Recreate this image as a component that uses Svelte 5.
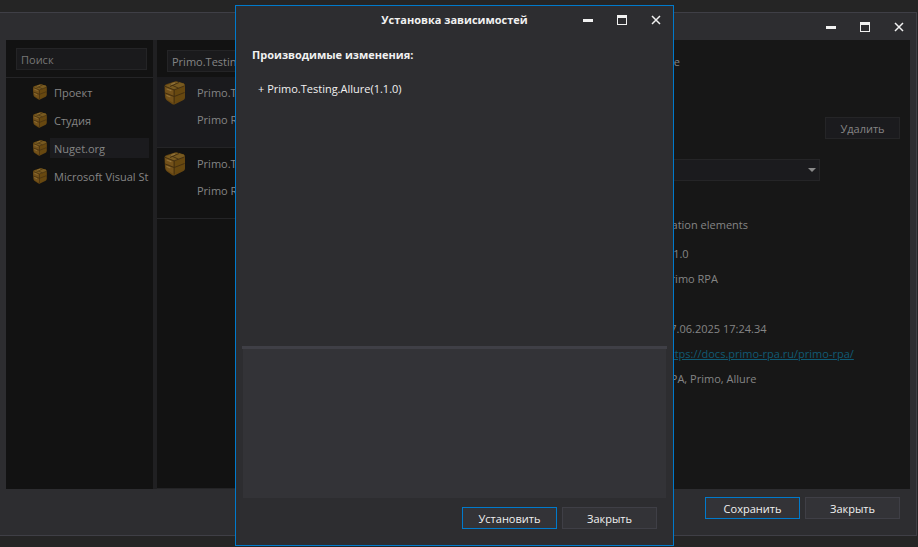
<script>
  const sources = ['Проект', 'Студия', 'Nuget.org', 'Microsoft Visual Studio Offline Packages'];
  let current = $state('Nuget.org');
  const packages = [
    { name: 'Primo.Testing', text: 'Primo RPA' },
    { name: 'Primo.Testing.Allure', text: 'Primo RPA' }
  ];
  let query = $state('Primo.Testing');
</script>

{#snippet box(size)}
  <svg class="box" width={size} height={size} viewBox="0 0 24 24" aria-hidden="true">
    <path d="M1.500 5Q2 3.500 4 3l7-2.300Q13 0 15 .8l5.500 1.400Q22 3 22 5v11.500q0 1.500-1.500 2.500L12 23.300q-1.500.7-3-.3L4 19.500Q2.500 18.500 2 16z" fill="#664712" />
    <path d="M2 5l9-4 3-.2 7 2L21.500 5l-10 4z" fill="#785a20" />
    <path d="M2 5.500l8.500 3.300v6L2.300 11.500zM2.500 12.500l8 3.200V22L3.500 18z" fill="#73511a" />
    <path d="M12 9.500 21.700 6v5.500L12 15zM12 16l9.500-3.500v4L12 22z" fill="#674810" />
    <path d="M2 5.300l9 3.600 10.500-4M11.200 9v13.500M2.200 12l9 3.500 10.300-4M7 3.200l8.500 4M16 1.500l-9 4" fill="none" stroke="#3f2d10" stroke-width=".9" />
    <path d="M4 8l4 1.600M4 14.500l3 1.200M8 3.500l3.500-1.400" stroke="#91723a" stroke-width="1.200" stroke-linecap="round" />
  </svg>
{/snippet}

{#snippet controls()}
  <div class="controls">
    <button aria-label="Свернуть"><svg width="12" height="12" viewBox="0 0 12 12"><path d="M1 5h10v3H1z" fill="#f1f1f1" /></svg></button>
    <button aria-label="Развернуть"><svg width="12" height="12" viewBox="0 0 12 12"><path d="M1 1h10v10H1zM2 4v6h8V4z" fill="#f1f1f1" fill-rule="evenodd" /></svg></button>
    <button aria-label="Закрыть окно"><svg width="12" height="12" viewBox="0 0 12 12"><path d="M2 2l8 8M10 2l-8 8" stroke="#f1f1f1" stroke-width="1.500" /></svg></button>
  </div>
{/snippet}

<div class="desktop">
  <main class="window">
    <header class="bar">{@render controls()}</header>
    <div class="content">
      <nav class="sources">
        <div class="find"><input aria-label="Поиск" placeholder="Поиск" /></div>
        <ul>
          {#each sources as s}
            <li>
              {@render box(16)}
              <button class:selected={current === s} onclick={() => (current = s)}>{s}</button>
            </li>
          {/each}
        </ul>
      </nav>
      <div class="splitter"></div>
      <section class="list">
        <div class="find"><input aria-label="Пакет" bind:value={query} /></div>
        {#each packages as p, i}
          <article class:active={i === 0}>
            {@render box(24)}
            <div><p>{p.name}</p><p>{p.text}</p></div>
          </article>
        {/each}
      </section>
      <section class="details">
        <h2>Primo.Testing.Allure</h2>
        <button class="remove">Удалить</button>
        <div class="version">
          <select aria-label="Версия"><option>1.1.0</option></select>
          <svg width="8" height="4" viewBox="0 0 8 4"><path d="M0 0h8L4 4z" fill="#8a8a8a" /></svg>
        </div>
        <p class="about">Automation elements</p>
        <div class="facts">
          <p>1.1.0</p>
          <p>Primo RPA</p>
          <p class="date">27.06.2025 17:24.34</p>
          <p><a href="https://docs.primo-rpa.ru/primo-rpa/">https://docs.primo-rpa.ru/primo-rpa/</a></p>
          <p>RPA, Primo, Allure</p>
        </div>
      </section>
    </div>
    <footer>
      <button class="btn primary">Сохранить</button>
      <button class="btn">Закрыть</button>
    </footer>
  </main>

  <div class="dialog" role="dialog" aria-labelledby="dialog-title">
    <header class="bar">
      <h1 id="dialog-title">Установка зависимостей</h1>
      {@render controls()}
    </header>
    <div class="changes">
      <h2>Производимые изменения:</h2>
      <p>+ Primo.Testing.Allure(1.1.0)</p>
    </div>
    <div class="rule"></div>
    <div class="log"></div>
    <footer>
      <button class="btn primary">Установить</button>
      <button class="btn">Закрыть</button>
    </footer>
  </div>
</div>

<style>
  :global(body) { margin: 0; background: #252525; }
  .desktop {
    position: relative;
    box-sizing: border-box;
    height: 100vh;
    min-height: 420px;
    padding: 12px 1px 11px 0;
    overflow: hidden;
    background: #252525;
    color: #f1f1f1;
    font: 11px/16px "Segoe UI", "Open Sans", "Noto Sans", sans-serif;
  }
  .desktop * { box-sizing: border-box; }
  h1, h2, p, ul { margin: 0; padding: 0; font-size: 11px; }
  button, input, select { font: inherit; color: inherit; }
  svg { display: block; flex: none; }

  .window {
    height: 100%;
    display: flex;
    flex-direction: column;
    background: #2d2d30;
    border: 1px solid #3f3f46;
    border-left: 0;
  }
  .bar { display: flex; height: 27px; flex: none; justify-content: flex-end; align-items: center; }
  .controls { display: flex; }
  .controls button {
    width: 34px;
    height: 26px;
    padding: 0;
    border: 0;
    background: none;
    display: grid;
    place-items: center;
  }
  .content {
    flex: 1;
    min-height: 0;
    margin: 0 6px;
    display: grid;
    grid-template-columns: 147px 4px 350px minmax(0, 1fr);
    background: #171717;
    color: #858585;
  }
  .sources, .list { background: #121212; overflow: hidden; }
  .find { height: 38px; padding: 8px 6px 0 10px; border-bottom: 1px solid #242426; }
  .find input {
    width: 100%;
    height: 22px;
    padding: 0 4px;
    border: 1px solid #242426;
    background: #1a1a1c;
    outline: 0;
  }
  .find input::placeholder { color: #777; opacity: 1; }
  .sources ul { list-style: none; padding: 0 4px 0 26px; }
  .sources li { display: flex; align-items: center; gap: 2px; height: 28px; }
  .sources li button {
    flex: 1;
    min-width: 0;
    height: 20px;
    padding: 1px 0 0 4px;
    border: 0;
    background: none;
    overflow: hidden;
    white-space: nowrap;
    text-align: left;
  }
  .sources li .selected { background: #1b1b1e; }
  .splitter { background: #202022; }
  .list { border-bottom: 1px solid #242426; }
  .list .find { height: 37px; padding-top: 10px; border: 0; }
  article {
    display: flex;
    gap: 10px;
    height: 71px;
    padding: 4px 6px;
    border-bottom: 1px solid #242426;
  }
  article.active { background: #1a1a1d; }
  article div { display: grid; gap: 11px; align-content: start; padding-top: 4px; }

  .details { display: flex; flex-direction: column; padding: 14px 10px 0; }
  .details h2 { margin-right: 220px; font-weight: 400; text-align: right; }
  .remove {
    align-self: flex-end;
    width: 75px;
    height: 22px;
    margin-top: 47px;
    padding: 1px 0 0;
    border: 1px solid #252527;
    background: #1b1b1e;
  }
  .version { position: relative; margin: 20px 80px 0 0; }
  .version select {
    display: block;
    width: 100%;
    height: 22px;
    padding: 0 6px;
    appearance: none;
    border: 1px solid #252527;
    background: #1b1b1e;
  }
  .version svg { position: absolute; right: 4px; top: 9px; }
  .about { margin: 36px 152px 0 0; text-align: right; }
  .facts { margin: 13px 0 0 147px; display: grid; gap: 9px; white-space: nowrap; }
  .facts .date { margin-top: 25px; }
  .facts a { color: #105a74; }

  footer { display: flex; justify-content: flex-end; gap: 5px; flex: none; padding: 8px 16px 16px; }
  .btn {
    width: 95px;
    height: 22px;
    padding: 1px 0 0;
    border: 1px solid #3f3f46;
    background: #333337;
  }
  .btn.primary { border-color: #007acc; }

  .dialog {
    position: absolute;
    top: 5px;
    bottom: 1px;
    left: 235px;
    width: 439px;
    display: flex;
    flex-direction: column;
    background: #2d2d30;
    border: 1px solid #007acc;
  }
  .dialog .bar h1 { flex: 1; padding-left: 102px; text-align: center; }
  .changes { flex: 1; padding: 14px 16px; }
  .changes p { margin-top: 18px; padding-left: 6px; }
  .rule { height: 3px; flex: none; margin: 0 6px; background: #3f3f46; }
  .log { height: 149px; flex: none; margin: 0 7px; background: #333337; }
  .dialog footer { padding-top: 9px; }
</style>
